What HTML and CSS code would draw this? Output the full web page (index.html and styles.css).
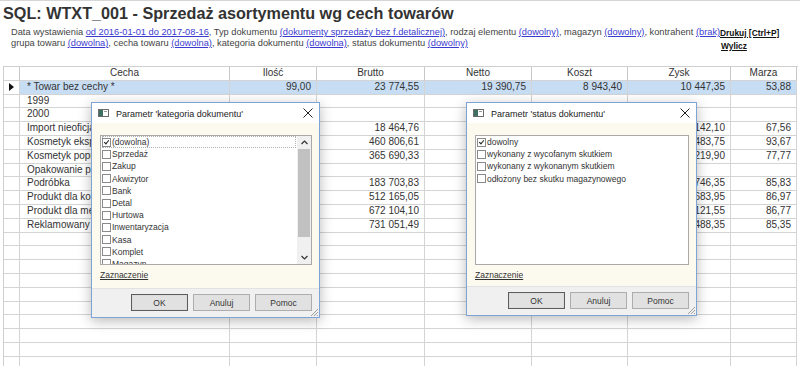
FILE: index.html
```html
<!DOCTYPE html>
<html lang="pl">
<head>
<meta charset="utf-8">
<title>SQL: WTXT_001</title>
<link rel="stylesheet" href="styles.css">
</head>
<body>
<div class="page">
  <h1 class="title">SQL: WTXT_001 - Sprzedaż asortymentu wg cech towarów</h1>
  <div class="params-row">
    <div class="params">
      <div class="pline">Data wystawienia <a href="#">od 2016-01-01 do 2017-08-16</a>, Typ dokumentu <a href="#">(dokumenty sprzedaży bez f.detalicznej)</a>, rodzaj elementu <a href="#">(dowolny)</a>, magazyn <a href="#">(dowolny)</a>, kontrahent <a href="#">(brak)</a></div>
      <div class="pline">grupa towaru <a href="#">(dowolna)</a>, cecha towaru <a href="#">(dowolna)</a>, kategoria dokumentu <a href="#">(dowolna)</a>, status dokumentu <a href="#">(dowolny)</a></div>
    </div>
    <div class="actions">
      <a href="#">Drukuj [Ctrl+P]</a>
      <a href="#">Wylicz</a>
    </div>
  </div>

  <div class="grid">
    <div class="row head">
      <div class="c"></div><div class="c ctr">Cecha</div><div class="c ctr">Ilość</div><div class="c ctr">Brutto</div><div class="c ctr">Netto</div><div class="c ctr">Koszt</div><div class="c ctr">Zysk</div><div class="c ctr">Marza</div>
    </div>
    <div class="row sel">
      <div class="c ind"><span class="tri"></span></div><div class="c">* Towar bez cechy *</div><div class="c num">99,00</div><div class="c num">23 774,55</div><div class="c num">19 390,75</div><div class="c num">8 943,40</div><div class="c num">10 447,35</div><div class="c num">53,88</div>
    </div>
    <div class="row"><div class="c"></div><div class="c">1999</div><div class="c"></div><div class="c"></div><div class="c"></div><div class="c"></div><div class="c"></div><div class="c"></div></div>
    <div class="row"><div class="c"></div><div class="c">2000</div><div class="c"></div><div class="c"></div><div class="c"></div><div class="c"></div><div class="c"></div><div class="c"></div></div>
    <div class="row"><div class="c"></div><div class="c">Import nieoficjalny</div><div class="c num">12,00</div><div class="c num">18 464,76</div><div class="c num">15 011,99</div><div class="c num">4 869,89</div><div class="c num">10 142,10</div><div class="c num">67,56</div></div>
    <div class="row"><div class="c"></div><div class="c">Kosmetyk eksportowy</div><div class="c num">310,00</div><div class="c num">460 806,61</div><div class="c num">374 639,52</div><div class="c num">23 655,77</div><div class="c num">350 483,75</div><div class="c num">93,67</div></div>
    <div class="row"><div class="c"></div><div class="c">Kosmetyk popularny</div><div class="c num">245,00</div><div class="c num">365 690,33</div><div class="c num">297 309,21</div><div class="c num">66 089,31</div><div class="c num">231 219,90</div><div class="c num">77,77</div></div>
    <div class="row"><div class="c"></div><div class="c">Opakowanie promocyjne</div><div class="c"></div><div class="c"></div><div class="c"></div><div class="c"></div><div class="c"></div><div class="c"></div></div>
    <div class="row"><div class="c"></div><div class="c">Podróbka</div><div class="c num">128,00</div><div class="c num">183 703,83</div><div class="c num">149 352,71</div><div class="c num">21 606,36</div><div class="c num">127 746,35</div><div class="c num">85,83</div></div>
    <div class="row"><div class="c"></div><div class="c">Produkt dla kobiet</div><div class="c num">402,00</div><div class="c num">512 165,05</div><div class="c num">416 394,35</div><div class="c num">54 210,40</div><div class="c num">362 683,95</div><div class="c num">86,97</div></div>
    <div class="row"><div class="c"></div><div class="c">Produkt dla mężczyzn</div><div class="c num">530,00</div><div class="c num">672 104,10</div><div class="c num">546 426,10</div><div class="c num">72 304,55</div><div class="c num">474 121,55</div><div class="c num">86,77</div></div>
    <div class="row"><div class="c"></div><div class="c">Reklamowany</div><div class="c num">575,00</div><div class="c num">731 051,49</div><div class="c num">594 350,81</div><div class="c num">86 862,46</div><div class="c num">507 488,35</div><div class="c num">85,35</div></div>
    <div class="row"><div class="c"></div><div class="c"></div><div class="c"></div><div class="c"></div><div class="c"></div><div class="c"></div><div class="c"></div><div class="c"></div></div>
    <div class="row"><div class="c"></div><div class="c"></div><div class="c"></div><div class="c"></div><div class="c"></div><div class="c"></div><div class="c"></div><div class="c"></div></div>
    <div class="row"><div class="c"></div><div class="c"></div><div class="c"></div><div class="c"></div><div class="c"></div><div class="c"></div><div class="c"></div><div class="c"></div></div>
    <div class="row"><div class="c"></div><div class="c"></div><div class="c"></div><div class="c"></div><div class="c"></div><div class="c"></div><div class="c"></div><div class="c"></div></div>
    <div class="row"><div class="c"></div><div class="c"></div><div class="c"></div><div class="c"></div><div class="c"></div><div class="c"></div><div class="c"></div><div class="c"></div></div>
    <div class="row"><div class="c"></div><div class="c"></div><div class="c"></div><div class="c"></div><div class="c"></div><div class="c"></div><div class="c"></div><div class="c"></div></div>
    <div class="row"><div class="c"></div><div class="c"></div><div class="c"></div><div class="c"></div><div class="c"></div><div class="c"></div><div class="c"></div><div class="c"></div></div>
    <div class="row"><div class="c"></div><div class="c"></div><div class="c"></div><div class="c"></div><div class="c"></div><div class="c"></div><div class="c"></div><div class="c"></div></div>
    <div class="row"><div class="c"></div><div class="c"></div><div class="c"></div><div class="c"></div><div class="c"></div><div class="c"></div><div class="c"></div><div class="c"></div></div>
    <div class="row"><div class="c"></div><div class="c"></div><div class="c"></div><div class="c"></div><div class="c"></div><div class="c"></div><div class="c"></div><div class="c"></div></div>
  </div>
</div>

<div class="dialog dlg-left">
  <div class="titlebar">
    <svg class="appicon" width="11" height="8" viewBox="0 0 11 8"><rect x="0.5" y="0.5" width="10" height="7" fill="#fff" stroke="#6b6b6b"/><rect x="1" y="1" width="4" height="6" fill="#3f6f63"/><rect x="6" y="2" width="3" height="1" fill="#9a9a9a"/></svg>
    <span class="ttext">Parametr 'kategoria dokumentu'</span>
    <svg class="close" width="10" height="10" viewBox="0 0 10 10"><path d="M0.5 0.5 L9.5 9.5 M9.5 0.5 L0.5 9.5" stroke="#222" stroke-width="1" fill="none"/></svg>
  </div>
  <div class="dbody">
    <div class="listbox">
      <div class="items">
        <div class="item focus"><span class="cb on"></span>(dowolna)</div>
        <div class="item"><span class="cb"></span>Sprzedaż</div>
        <div class="item"><span class="cb"></span>Zakup</div>
        <div class="item"><span class="cb"></span>Akwizytor</div>
        <div class="item"><span class="cb"></span>Bank</div>
        <div class="item"><span class="cb"></span>Detal</div>
        <div class="item"><span class="cb"></span>Hurtowa</div>
        <div class="item"><span class="cb"></span>Inwentaryzacja</div>
        <div class="item"><span class="cb"></span>Kasa</div>
        <div class="item"><span class="cb"></span>Komplet</div>
        <div class="item"><span class="cb"></span>Magazyn</div>
      </div>
      <div class="scrollbar">
        <div class="sbtn"><svg width="7" height="5" viewBox="0 0 7 5"><path d="M0.5 4 L3.5 1 L6.5 4" stroke="#333" stroke-width="1.2" fill="none"/></svg></div>
        <div class="track"><div class="thumb"></div></div>
        <div class="sbtn"><svg width="7" height="5" viewBox="0 0 7 5"><path d="M0.5 1 L3.5 4 L6.5 1" stroke="#333" stroke-width="1.2" fill="none"/></svg></div>
      </div>
    </div>
    <a class="mark" href="#">Zaznaczenie</a>
  </div>
  <div class="footer">
    <button class="btn def">OK</button>
    <button class="btn">Anuluj</button>
    <button class="btn">Pomoc</button>
    <svg class="grip" width="10" height="10" viewBox="0 0 10 10"><path d="M9 2 L2 9 M9 5 L5 9 M9 8 L8 9" stroke="#a0a0a0" stroke-width="1" fill="none"/></svg>
  </div>
</div>

<div class="dialog dlg-right">
  <div class="titlebar">
    <svg class="appicon" width="11" height="8" viewBox="0 0 11 8"><rect x="0.5" y="0.5" width="10" height="7" fill="#fff" stroke="#6b6b6b"/><rect x="1" y="1" width="4" height="6" fill="#3f6f63"/><rect x="6" y="2" width="3" height="1" fill="#9a9a9a"/></svg>
    <span class="ttext">Parametr 'status dokumentu'</span>
    <svg class="close" width="10" height="10" viewBox="0 0 10 10"><path d="M0.5 0.5 L9.5 9.5 M9.5 0.5 L0.5 9.5" stroke="#222" stroke-width="1" fill="none"/></svg>
  </div>
  <div class="dbody">
    <div class="listbox">
      <div class="items">
        <div class="item"><span class="cb on"></span>dowolny</div>
        <div class="item"><span class="cb"></span>wykonany z wycofanym skutkiem</div>
        <div class="item"><span class="cb"></span>wykonany z wykonanym skutkiem</div>
        <div class="item"><span class="cb"></span>odłożony bez skutku magazynowego</div>
      </div>
    </div>
    <a class="mark" href="#">Zaznaczenie</a>
  </div>
  <div class="footer">
    <button class="btn def">OK</button>
    <button class="btn">Anuluj</button>
    <button class="btn">Pomoc</button>
    <svg class="grip" width="10" height="10" viewBox="0 0 10 10"><path d="M9 2 L2 9 M9 5 L5 9 M9 8 L8 9" stroke="#a0a0a0" stroke-width="1" fill="none"/></svg>
  </div>
</div>
</body>
</html>
```

FILE: styles.css
```css
html, body {
  margin: 0;
  padding: 0;
  background: #fff;
  overflow: hidden;
}
body {
  width: 800px;
  height: 366px;
  font-family: "Liberation Sans", Arial, sans-serif;
  color: #333;
  border-top: 1px solid #d6d6d6;
  box-sizing: border-box;
  position: relative;
}
.title {
  margin: 0;
  padding: 2px 0 0 3px;
  font-size: 16.2px;
  line-height: 20px;
  font-weight: bold;
  color: #333;
}
.params-row {
  display: flex;
  margin-top: 4px;
}
.params {
  width: 709px;
  padding-left: 11px;
  font-size: 9.27px;
  line-height: 11px;
  color: #444;
}
.pline {
  white-space: nowrap;
}
.params a {
  color: #3b3bd0;
  text-decoration: underline;
}
.actions {
  display: flex;
  flex-direction: column;
  gap: 2px;
  padding-top: 1px;
}
.actions a {
  font-size: 8.4px;
  line-height: 11px;
  font-weight: bold;
  color: #111;
  text-decoration: underline;
}
.actions a + a {
  padding-left: 1px;
}

.grid {
  margin: 14px 0 0 3px;
  border-top: 1px solid #cfcfcf;
  border-left: 1px solid #cfcfcf;
  width: 794px;
}
.row {
  display: grid;
  grid-template-columns: 16px 210px 87px 108px 107px 96px 103px 66px;
  height: 13.8px;
}
.c {
  box-sizing: border-box;
  border-right: 1px solid #d4d4d4;
  border-bottom: 1px solid #d4d4d4;
  font-size: 10px;
  line-height: 12.8px;
  padding: 0 5px 0 7px;
  white-space: nowrap;
  overflow: hidden;
  color: #333;
}
.c.num { text-align: right; }
.c.ctr { text-align: center; padding: 0; }
.head .c { border-right-color: #c8c8c8; }
.sel .c { background: #c7ddf3; }
.sel .c.ind { background: #fff; }
.ind {
  padding: 0;
  display: flex;
  align-items: center;
  justify-content: center;
}
.tri {
  width: 0;
  height: 0;
  border-top: 4px solid transparent;
  border-bottom: 4px solid transparent;
  border-left: 5px solid #111;
}

/* dialogs */
.dialog {
  position: absolute;
  box-sizing: border-box;
  border: 1px solid #7ea3d6;
  background: #fcf9ef;
  display: flex;
  flex-direction: column;
  box-shadow: 0 3px 12px rgba(0,0,0,0.28);
  font-family: "Liberation Sans", Arial, sans-serif;
}
.dlg-left { left: 91px; top: 101px; width: 229px; height: 216px; }
.dlg-right { left: 466px; top: 101px; width: 231px; height: 214px; }
.titlebar {
  height: 20px;
  background: #fff;
  display: flex;
  align-items: center;
  padding: 0 6px 0 6px;
  flex: none;
}
.appicon { flex: none; }
.ttext {
  font-size: 9px;
  color: #222;
  margin-left: 7px;
  flex: 1;
  padding-top: 1px;
}
.close { flex: none; }
.dbody {
  flex: 1;
  padding: 12px 7px 0 8px;
  display: flex;
  flex-direction: column;
}
.listbox {
  height: 130px;
  box-sizing: border-box;
  border: 1px solid #a9a9a9;
  background: #fff;
  display: flex;
}
.items {
  flex: 1;
  padding: 0 0 0 1px;
  overflow: hidden;
}
.item {
  height: 12.2px;
  display: flex;
  align-items: center;
  font-size: 8.5px;
  color: #333;
  white-space: nowrap;
}
.item.focus {
  box-sizing: border-box;
  outline: 1px dotted #b0b0b0;
  outline-offset: -1px;
  margin-right: 1px;
}
.cb {
  width: 9px;
  height: 9px;
  box-sizing: border-box;
  border: 1px solid #8a8a8a;
  background: #fff;
  margin-right: 1px;
  flex: none;
  position: relative;
}
.cb.on::after {
  content: "";
  position: absolute;
  left: 2px;
  top: 0px;
  width: 2px;
  height: 4px;
  border-right: 1.3px solid #222;
  border-bottom: 1.3px solid #222;
  transform: rotate(40deg);
}
.scrollbar {
  width: 14px;
  flex: none;
  display: flex;
  flex-direction: column;
  background: #f0f0f0;
}
.sbtn {
  height: 13px;
  display: flex;
  align-items: center;
  justify-content: center;
  flex: none;
}
.track {
  flex: 1;
  padding: 0 1px;
}
.thumb {
  height: 88px;
  background: #c1c1c1;
}
.mark {
  margin-top: 5px;
  font-size: 8.5px;
  line-height: 10px;
  color: #333;
  text-decoration: underline;
  align-self: flex-start;
}
.footer {
  flex: none;
  height: 29px;
  background: #f0f0f0;
  border-top: 1px solid #e2e2e2;
  box-sizing: border-box;
  display: flex;
  justify-content: flex-end;
  align-items: flex-start;
  gap: 5px;
  padding: 5px 7px 0 0;
  position: relative;
}
.btn {
  width: 57px;
  height: 17px;
  box-sizing: border-box;
  border: 1px solid #adadad;
  background: #e1e1e1;
  font-family: "Liberation Sans", Arial, sans-serif;
  font-size: 8.5px;
  color: #333;
  padding: 0;
  margin: 0;
}
.btn.def {
  border: 1px solid #5c5c5c;
  box-shadow: inset 0 0 0 1px #dcdcdc;
}
.grip {
  position: absolute;
  right: 0;
  bottom: 0;
}
```
